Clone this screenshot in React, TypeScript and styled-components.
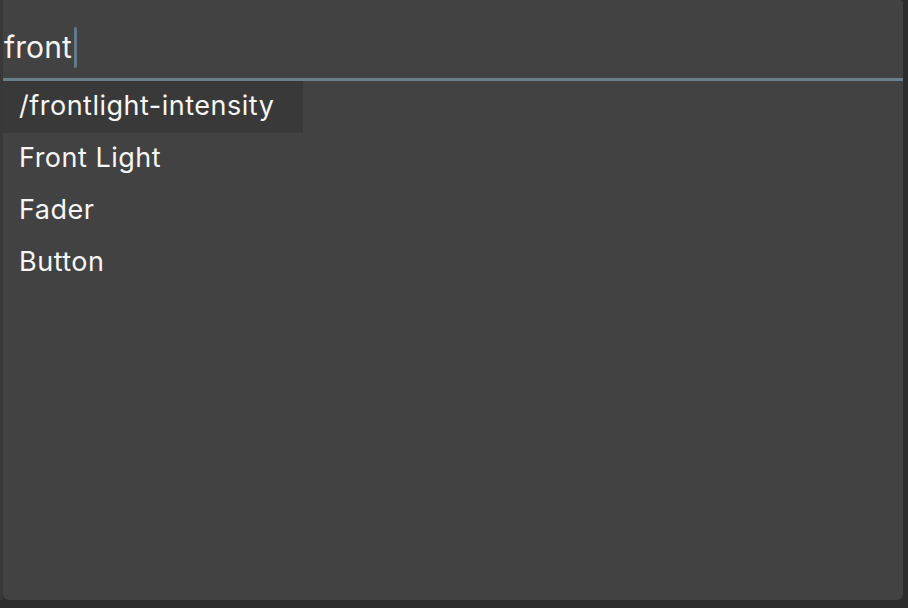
import { useState } from "react";
import styled, { createGlobalStyle } from "styled-components";

const GlobalStyle = createGlobalStyle`
  html, body {
    margin: 0;
    padding: 0;
    background: #2c2c2c;
  }
  body {
    font-family: Inter, "Noto Sans", sans-serif;
    -webkit-font-smoothing: antialiased;
  }
`;

const Screen = styled.div`
  width: 908px;
  height: 608px;
  display: flex;
  align-items: flex-start;
`;

const Edge = styled.div`
  width: 3px;
  height: 600px;
  background: #383838;
`;

const Panel = styled.div`
  width: 900px;
  height: 600px;
  background: #424242;
  border-radius: 0 4px 6px 6px;
  display: flex;
  flex-direction: column;
  overflow: hidden;
`;

const SearchRow = styled.div`
  height: 81px;
  display: flex;
  align-items: flex-start;
  padding-top: 27px;
  box-sizing: border-box;
  border-bottom: 3px solid #6a7f8c;
`;

const Query = styled.span`
  font-size: 30px;
  line-height: 41px;
  color: #f4f4f4;
  letter-spacing: 0.1px;
  padding-left: 1px;
`;

const Caret = styled.span`
  display: inline-block;
  width: 3px;
  height: 41px;
  margin-left: 2px;
  border-radius: 1.5px;
  background: #62798a;
`;

const ResultList = styled.ul`
  list-style: none;
  margin: 0;
  padding: 0;
`;

const ResultItem = styled.li<{ $active?: boolean }>`
  width: 300px;
  height: 52px;
  box-sizing: border-box;
  padding: 0 0 4px 16px;
  display: flex;
  align-items: center;
  font-size: 27px;
  letter-spacing: 0.5px;
  color: #f6f6f6;
  background: ${(p) => (p.$active ? "#393939" : "transparent")};
  cursor: default;
`;

const results = ["/frontlight-intensity", "Front Light", "Fader", "Button"];

export default function App() {
  const [active] = useState(0);
  return (
    <>
      <GlobalStyle />
      <Screen>
        <Edge />
        <Panel>
          <SearchRow>
            <Query>front</Query>
            <Caret />
          </SearchRow>
          <ResultList>
            {results.map((r, i) => (
              <ResultItem key={r} $active={i === active}>
                {r}
              </ResultItem>
            ))}
          </ResultList>
        </Panel>
      </Screen>
    </>
  );
}
